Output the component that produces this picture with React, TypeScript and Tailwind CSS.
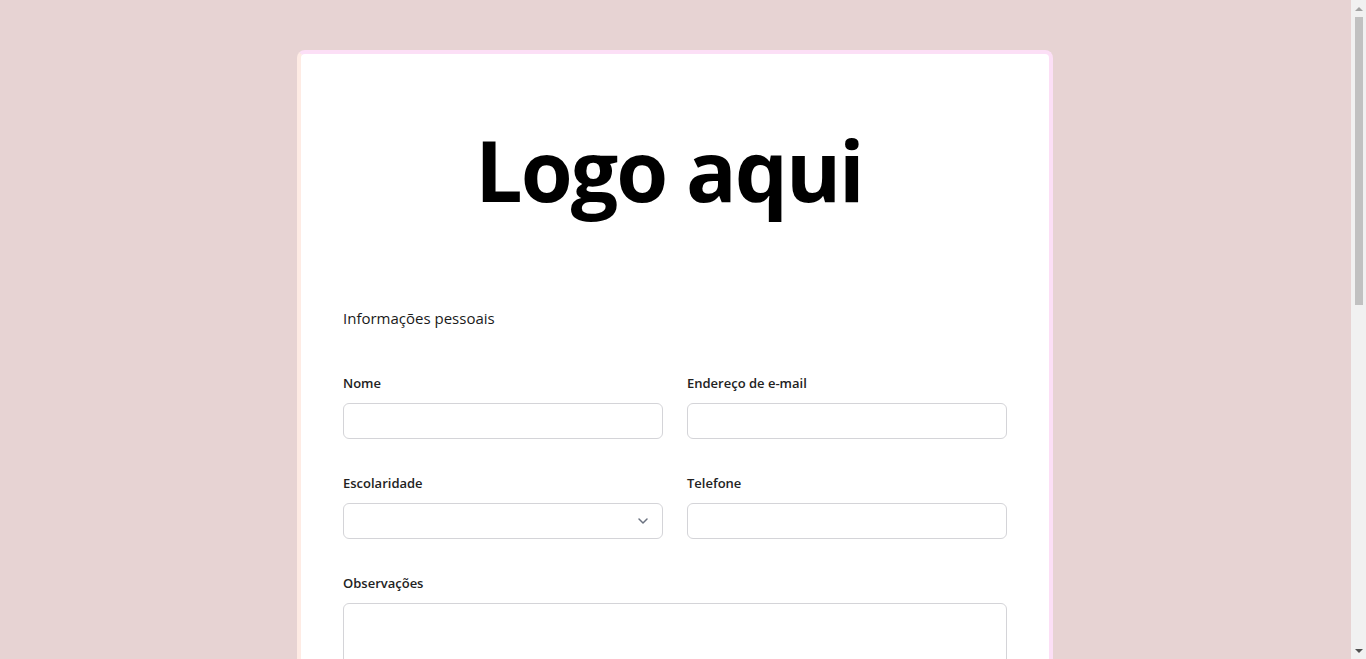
import { ChevronDown } from "lucide-react";

function App() {
  return (
    <div
      className="flex h-screen overflow-hidden bg-[#e7d3d3]"
      style={{ fontFamily: '"Open Sans", "Noto Sans", sans-serif' }}
    >
      <main className="flex-1 overflow-hidden pr-[1px] pt-[50px]">
        <div className="mx-auto w-[756px] rounded-lg border-4 border-t-[#fcdff6] border-r-[#fcdff6] border-l-[#feebe4] border-b-[#feebe4] bg-white px-[42px] pb-10">
          {/* Logo */}
          <div className="flex h-[250px] items-center justify-center pb-[18px] pr-3">
            <h1 className="text-[84px] font-bold leading-none tracking-[-2px] text-black">
              Logo aqui
            </h1>
          </div>

          <h2 className="mt-[3px] text-[15px] font-medium text-[#1a1a1a]">Informações pessoais</h2>

          <form className="mt-[44px] grid grid-cols-2 gap-x-6 gap-y-[35px]">
            <div>
              <label className="block text-[13px] font-semibold text-[#222]">Nome</label>
              <input className="mt-[10px] h-9 w-full rounded-md border border-[#d4d4d8]" />
            </div>
            <div>
              <label className="block text-[13px] font-semibold text-[#222]">Endereço de e-mail</label>
              <input className="mt-[10px] h-9 w-full rounded-md border border-[#d4d4d8]" />
            </div>
            <div>
              <label className="block text-[13px] font-semibold text-[#222]">Escolaridade</label>
              <div className="relative mt-[9px]">
                <select className="h-9 w-full appearance-none rounded-md border border-[#d4d4d8] bg-white" />
                <ChevronDown
                  className="pointer-events-none absolute right-[12px] top-[10px] h-4 w-4 text-[#6b7280]"
                  strokeWidth={2.25}
                />
              </div>
            </div>
            <div>
              <label className="block text-[13px] font-semibold text-[#222]">Telefone</label>
              <input className="mt-[9px] h-9 w-full rounded-md border border-[#d4d4d8]" />
            </div>
            <div className="col-span-2">
              <label className="block text-[13px] font-semibold text-[#222]">Observações</label>
              <textarea className="mt-[10px] h-[120px] w-full resize-none rounded-md border border-[#d4d4d8]" />
            </div>
          </form>
        </div>
      </main>

      {/* Scrollbar */}
      <div className="flex w-[15px] flex-col items-center bg-[#f1f1f1]">
        <div className="flex h-[17px] items-center justify-center">
          <div className="h-0 w-0 border-x-[4px] border-b-[4px] border-x-transparent border-b-[#a3a3a3]" />
        </div>
        <div className="h-[288px] w-[8px] bg-[#c1c1c1]" />
        <div className="flex-1" />
        <div className="flex h-[17px] items-center justify-center">
          <div className="h-0 w-0 border-x-[4px] border-t-[4px] border-x-transparent border-t-[#505050]" />
        </div>
      </div>
    </div>
  );
}

export default App;
